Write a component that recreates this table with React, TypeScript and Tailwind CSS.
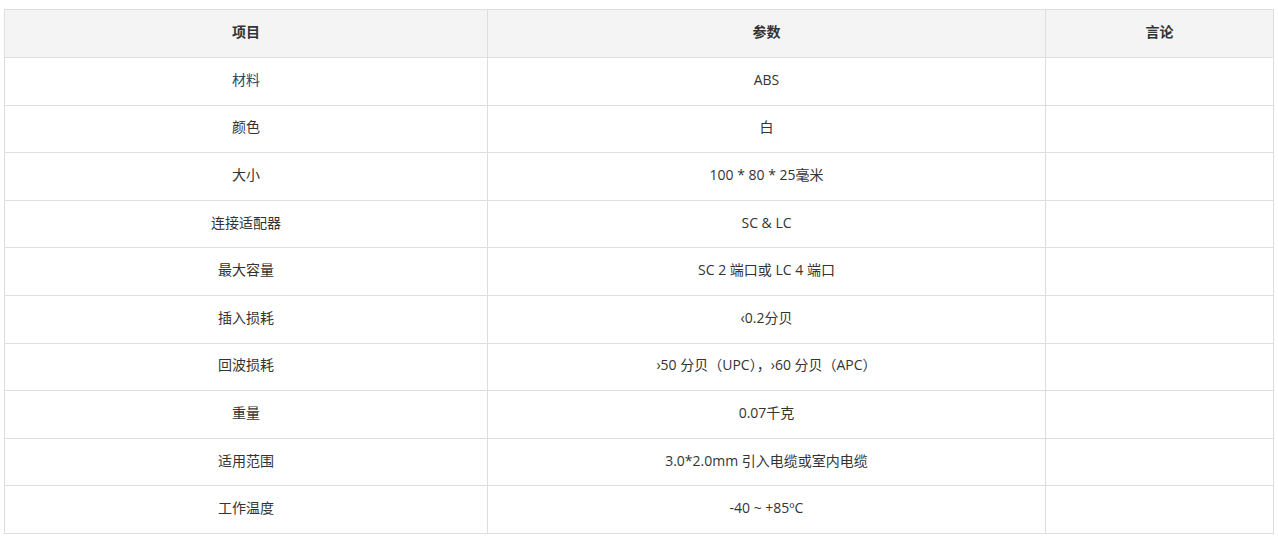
import React from "react";

const rows: [string, string][] = [
  ["材料", "ABS"],
  ["颜色", "白"],
  ["大小", "100 * 80 * 25毫米"],
  ["连接适配器", "SC & LC"],
  ["最大容量", "SC 2 端口或 LC 4 端口"],
  ["插入损耗", "‹0.2分贝"],
  ["回波损耗", "›50 分贝（UPC），›60 分贝（APC）"],
  ["重量", "0.07千克"],
  ["适用范围", "3.0*2.0mm 引入电缆或室内电缆"],
  ["工作温度", "-40 ~ +85ºC"],
];

export default function App() {
  return (
    <div className="bg-white w-[1278px] h-[537px] pt-[9px] pl-[4px]" style={{ fontFamily: '"Open Sans", "Noto Sans CJK SC", sans-serif' }}>
      <table className="border-collapse table-fixed w-[1269px] text-[14px] text-[#333]">
        <colgroup>
          <col className="w-[483px]" />
          <col className="w-[558px]" />
          <col className="w-[228px]" />
        </colgroup>
        <thead>
          <tr className="h-[48px] bg-[#f4f4f4]">
            <th className="border border-[#dedede] font-semibold text-center pb-[4px]">项目</th>
            <th className="border border-[#dedede] font-semibold text-center pb-[4px]">参数</th>
            <th className="border border-[#dedede] font-semibold text-center pb-[4px]">言论</th>
          </tr>
        </thead>
        <tbody>
          {rows.map(([a, b], i) => (
            <tr key={i} className="h-[47.6px]">
              <td className={"border border-[#dedede] text-center pb-[4px] " + (i === 0 ? "text-[#2a4a6e]" : "")}>{a}</td>
              <td className="border border-[#dedede] text-center pb-[4px]">{b}</td>
              <td className="border border-[#dedede]"></td>
            </tr>
          ))}
        </tbody>
      </table>
    </div>
  );
}
